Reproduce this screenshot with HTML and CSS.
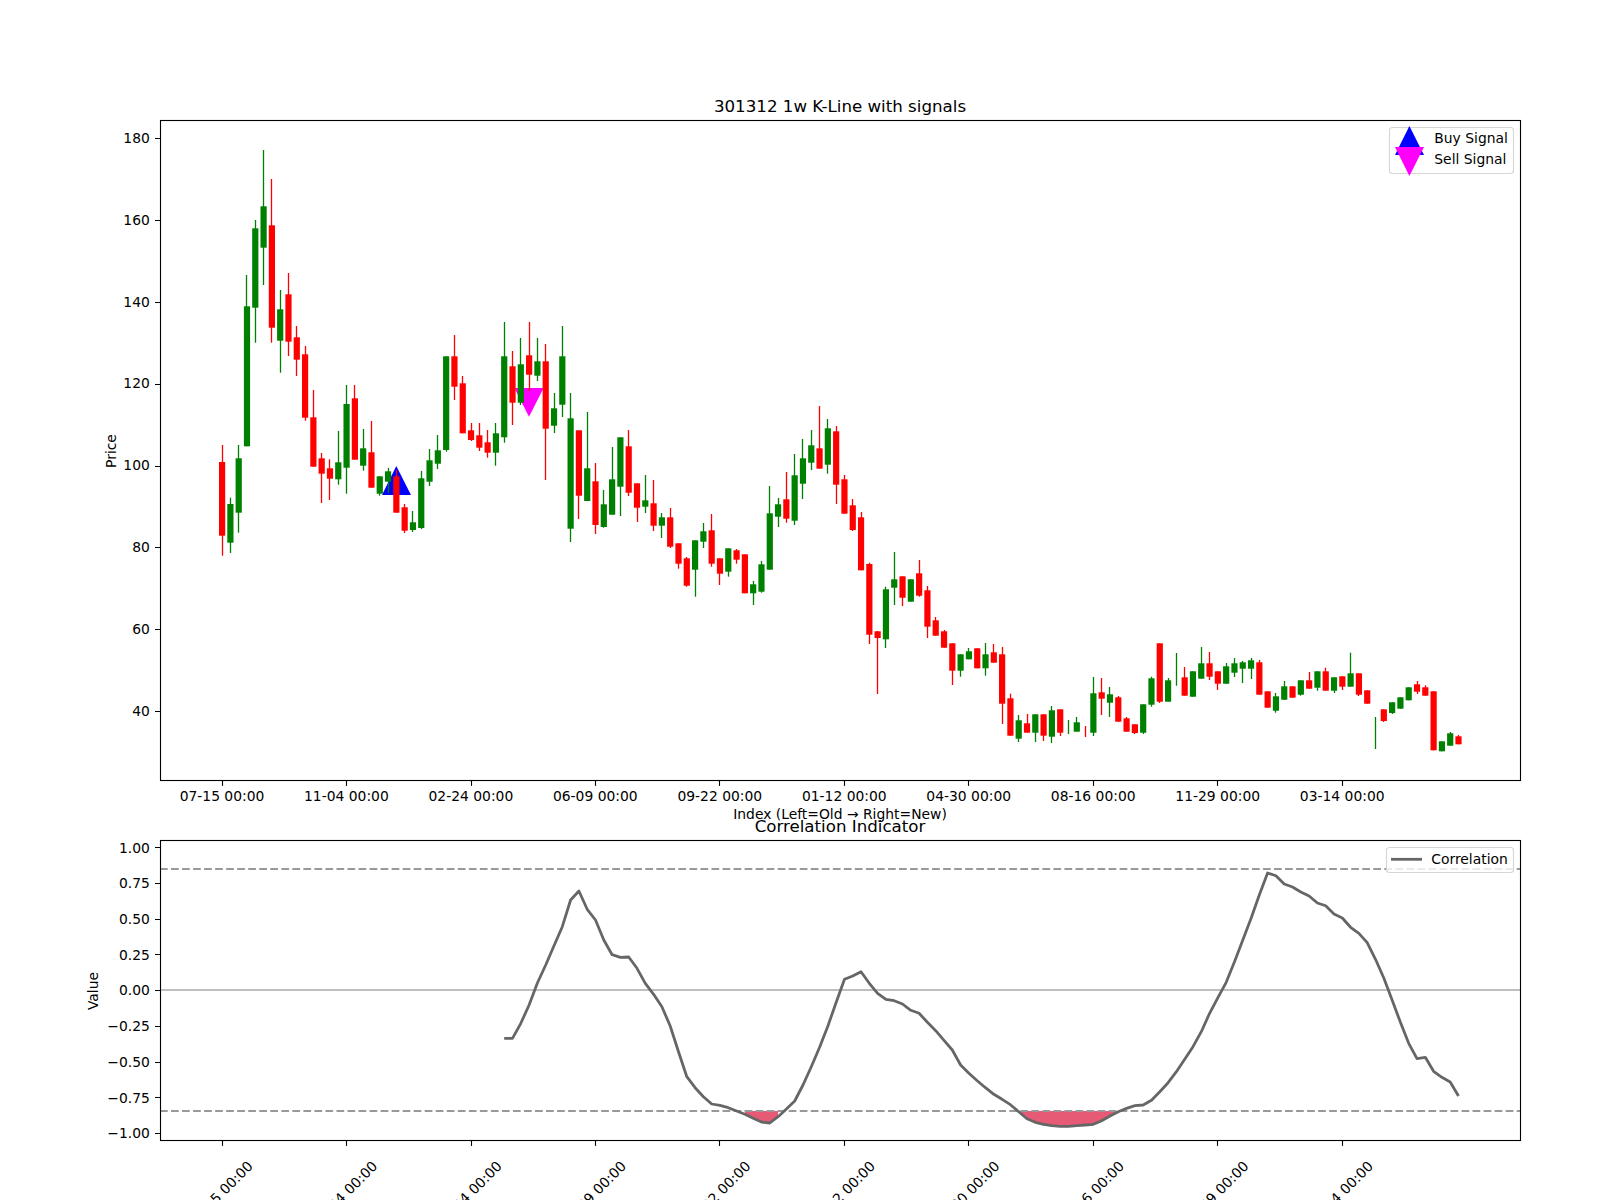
FILE: index.html
```html
<!DOCTYPE html>
<html lang="en">
<head>
<meta charset="utf-8">
<title>301312 1w K-Line with signals</title>
<link rel="stylesheet" href="styles.css">
</head>
<body>
<main class="figure">
<svg class="canvas" viewBox="0 0 1600 1200" width="1600" height="1200" xmlns="http://www.w3.org/2000/svg">
  <!-- K-line panel -->
  <polygon class="buy" points="396.3,466 411,495 382,495"/>
  <polygon class="sell" points="529,416.7 543.6,388 514.4,388"/>
  <g id="candles"></g>
  <rect class="spine" x="160.5" y="120.5" width="1360" height="660"/>
  <g id="price-x-ticks"></g>
  <path class="tick" d="M155 138.5h5M155 220.5h5M155 302.5h5M155 384.5h5M155 466.5h5M155 547.5h5M155 629.5h5M155 711.5h5"/>
  <g class="label end">
    <text x="149.8" y="143">180</text>
    <text x="149.8" y="224.8">160</text>
    <text x="149.8" y="306.6">140</text>
    <text x="149.8" y="388.4">120</text>
    <text x="149.8" y="470.2">100</text>
    <text x="149.8" y="552">80</text>
    <text x="149.8" y="633.8">60</text>
    <text x="149.8" y="715.6">40</text>
  </g>
  <g class="label mid">
    <text x="222" y="801">07-15 00:00</text>
    <text x="346.4" y="801">11-04 00:00</text>
    <text x="470.9" y="801">02-24 00:00</text>
    <text x="595.3" y="801">06-09 00:00</text>
    <text x="719.8" y="801">09-22 00:00</text>
    <text x="844.3" y="801">01-12 00:00</text>
    <text x="968.7" y="801">04-30 00:00</text>
    <text x="1093.2" y="801">08-16 00:00</text>
    <text x="1217.7" y="801">11-29 00:00</text>
    <text x="1342.2" y="801">03-14 00:00</text>
    <text x="840" y="819">Index (Left=Old → Right=New)</text>
  </g>
  <text class="title" x="840" y="111.7">301312 1w K-Line with signals</text>
  <text class="label mid" transform="rotate(-90 116 451)" x="116" y="451">Price</text>

  <g class="legend">
    <rect class="legend-box" x="1389.5" y="127.5" width="124" height="46" rx="3"/>
    <polygon class="buy" points="1409.4,126 1424,155 1395,155"/>
    <polygon class="sell" points="1409.4,176 1424,147 1395,147"/>
    <text class="label" x="1434.3" y="143.3">Buy Signal</text>
    <text class="label" x="1434.3" y="164">Sell Signal</text>
  </g>

  <!-- Correlation panel -->
  <g id="corr-fill"></g>
  <path class="dash" d="M160 869H1520M160 1111H1520"/>
  <path class="zero" d="M160 990H1520"/>
  <polyline class="corr" id="corr-line" points=""/>
  <rect class="spine" x="160.5" y="840.5" width="1360" height="300"/>
  <g id="corr-x-ticks"></g>
  <path class="tick" d="M155 847.5h5M155 883.5h5M155 919.5h5M155 954.5h5M155 990.5h5M155 1026.5h5M155 1062.5h5M155 1097.5h5M155 1133.5h5"/>
  <g class="label end">
    <text x="149.8" y="852.6">1.00</text>
    <text x="149.8" y="888.1">0.75</text>
    <text x="149.8" y="923.8">0.50</text>
    <text x="149.8" y="959.6">0.25</text>
    <text x="149.8" y="995">0.00</text>
    <text x="149.8" y="1031">−0.25</text>
    <text x="149.8" y="1066.8">−0.50</text>
    <text x="149.8" y="1102.5">−0.75</text>
    <text x="149.8" y="1138.3">−1.00</text>
  </g>
  <g class="label mid">
    <text transform="rotate(-45 220.3 1193.5)" x="220.3" y="1198.5">07-15 00:00</text>
    <text transform="rotate(-45 344.7 1193.5)" x="344.7" y="1198.5">11-04 00:00</text>
    <text transform="rotate(-45 469.2 1193.5)" x="469.2" y="1198.5">02-24 00:00</text>
    <text transform="rotate(-45 593.6 1193.5)" x="593.6" y="1198.5">06-09 00:00</text>
    <text transform="rotate(-45 718.1 1193.5)" x="718.1" y="1198.5">09-22 00:00</text>
    <text transform="rotate(-45 842.6 1193.5)" x="842.6" y="1198.5">01-12 00:00</text>
    <text transform="rotate(-45 967 1193.5)" x="967" y="1198.5">04-30 00:00</text>
    <text transform="rotate(-45 1091.5 1193.5)" x="1091.5" y="1198.5">08-16 00:00</text>
    <text transform="rotate(-45 1216 1193.5)" x="1216" y="1198.5">11-29 00:00</text>
    <text transform="rotate(-45 1340.5 1193.5)" x="1340.5" y="1198.5">03-14 00:00</text>
  </g>
  <text class="title" x="840" y="831.7">Correlation Indicator</text>
  <text class="label mid" transform="rotate(-90 98 991)" x="98" y="991">Value</text>

  <g class="legend">
    <rect class="legend-box" x="1386.5" y="847.5" width="127" height="25" rx="3"/>
    <path class="corr" d="M1391 859.3H1422"/>
    <text class="label" x="1431.3" y="864">Correlation</text>
  </g>
</svg>
</main>
<script src="chart.js"></script>
</body>
</html>
```
FILE: styles.css
```css
html, body {
  margin: 0;
  padding: 0;
  background: #fff;
}
.figure {
  width: 1600px;
  height: 1200px;
  overflow: hidden;
}
.canvas {
  display: block;
}
.title {
  font-family: "DejaVu Sans", sans-serif;
  font-size: 16.67px;
  text-anchor: middle;
  fill: #000;
}
.label {
  font-family: "DejaVu Sans", sans-serif;
  font-size: 13.89px;
  fill: #000;
}
.end { text-anchor: end; }
.mid { text-anchor: middle; }
.spine {
  fill: none;
  stroke: #000;
  stroke-width: 1.11;
}
.tick {
  fill: none;
  stroke: #000;
  stroke-width: 1.11;
}
.buy { fill: #0000ff; }
.sell { fill: #ff00ff; }
.up { fill: #008000; stroke: none; }
.down { fill: #ff0000; stroke: none; }
.wick-up { stroke: #008000; stroke-width: 1.3; fill: none; }
.wick-down { stroke: #ff0000; stroke-width: 1.3; fill: none; }
.legend-box {
  fill: #fff;
  fill-opacity: 0.8;
  stroke: #d6d6d6;
  stroke-width: 1.11;
}
.dash {
  fill: none;
  stroke: #999;
  stroke-width: 2.08;
  stroke-dasharray: 7.7 3.33;
}
.zero {
  fill: none;
  stroke: #aaa;
  stroke-width: 1.7;
}
.corr {
  fill: none;
  stroke: #666;
  stroke-width: 2.78;
  stroke-linejoin: round;
}
.zone {
  fill: #dc143c;
  fill-opacity: 0.7;
  stroke: none;
}
```
FILE: chart.js
```js
var SVG_NS = "http://www.w3.org/2000/svg";
var X0 = 222.1, STEP = 8.298;

// [green?, wick top, wick bottom, body top, body bottom] in plot pixels, oldest first
var candles = [
  [0,445,555.7,462,535.7],[1,497.7,553,504,542.7],[1,445,532.7,458.3,512.7],[1,275,446.3,306.3,446.3],
  [1,220,342.7,228.3,307.7],[1,150,285,206.3,247.7],[0,179,342.7,225.3,327.7],[1,290,372.7,309.3,340.7],
  [0,273,356,294.3,341.7],[0,326,376,337.3,359.7],[0,346,420.7,354.3,417.7],[0,390,466.7,417.3,466.7],
  [0,453,503,458.3,473.7],[0,459.3,500,468.3,478.7],[1,431,484.7,462.3,479.3],[1,385,493.7,404,467.7],
  [0,385,459.7,398.3,459.7],[1,429,470.7,448.3,465.7],[0,421,487.7,452.3,487.7],[1,476.3,495.7,476.3,493.7],
  [1,468,493,471.3,481.7],[0,470,512.7,476.3,512.7],[0,504,533,507.3,530.7],[1,511,532,522.3,530],
  [1,471,529,478.3,528],[1,449,486,460.3,481.7],[1,435,469,450.3,463.7],[1,356.3,451.7,356.3,450],
  [0,335,400,356.3,386.7],[0,376,433.3,383.3,433.3],[0,423,441,430.3,440],[0,423,451,435.3,447.7],
  [0,430,457.7,442.3,452.7],[1,423,465.7,433.3,452.7],[1,322,442.7,356.3,437.3],[0,351,425,366.3,402.7],
  [1,338,405,364.3,402.7],[0,322,391,355.3,374.7],[1,338,381,361.3,375.7],[0,344,480,361.3,428.7],
  [1,393,433,408.3,425.7],[1,326,417,356.3,404.7],[1,393,542,418.3,528.7],[0,430.3,519,430.3,495.7],
  [1,412,501,468.3,501],[0,463,534,481.3,525],[1,490,527.7,504.3,527],[1,447,514.7,479.3,514.7],
  [1,437.3,516,437.3,486.7],[0,430,496,446.3,492.7],[0,483.3,522,483.3,507.7],[1,475,513,500.3,506.7],
  [0,480,531,503.3,525.7],[1,513,538,517.3,525.7],[0,508,548,517.3,546.7],[0,543.3,568.7,543.3,563.7],
  [0,557,586.7,558.3,585.7],[1,540.3,596.7,540.3,569.7],[1,523,548,531.3,541.7],[0,514,566.7,530.3,563.7],
  [0,558.3,585,558.3,573.7],[1,548.3,576.7,548.3,571.7],[0,549,563.7,550.3,559.7],[0,554.3,593.3,554.3,593.3],
  [1,581,605,584.3,593.3],[1,561,592.7,564.3,591.7],[1,486,569.7,513.3,569.7],[1,498,527,504.3,516.7],
  [0,472,522.7,499.3,518.7],[1,454,525,475.3,520.7],[1,439,499,458.3,483.7],[1,430,470,445.3,462.7],
  [0,406,468.7,448.3,468.7],[1,419,473.7,428.3,464.7],[0,426,504,431.3,484.7],[0,475,513.7,479.3,513.7],
  [0,499,531,505.3,530],[0,512,570.3,517.3,570.3],[0,562.7,644,564,634.7],[0,631,694,631.3,638],
  [1,586.7,648,589.3,639.3],[1,552,605,579.3,587.7],[0,576.3,606,576.3,597.7],[1,579.3,601.7,579.3,601.7],
  [0,560,596.7,573.3,595.7],[0,586,638,590.3,626.7],[0,617,635.7,620.3,635.7],[0,630,647.7,631.3,647.7],
  [0,643.3,685,643.3,670.7],[1,654.3,676.7,654.3,670.7],[1,648,659.3,651.3,659.3],[0,648.3,668.3,648.3,668.3],
  [1,643,675.7,654.3,668.3],[0,644,662.7,652.3,662.7],[0,647,724,654.3,703.7],[0,693.7,735.7,698.3,735.7],
  [1,715,742,720.3,738.7],[0,714,732.7,723.3,732.7],[1,714.3,742,714.3,732.7],[0,714.3,741,714.3,735.7],
  [1,706,743,710.3,736.7],[0,709.3,736,709.3,732.7],[1,720,734,0,0],[1,717,731.7,722.3,731.7],
  [0,726,737,0,0],[1,677,736,693.3,732.7],[0,678,715,692.3,698.7],[1,687,717,694.3,702.7],
  [0,696,721.7,697.3,721.7],[0,717,731.7,718.3,731.7],[0,724.3,734,724.3,733],[1,704.3,734,704.3,732.7],
  [1,676.7,706.7,678.3,704.7],[0,643.3,703,643.3,701.7],[1,678,701.7,680.3,701.7],[1,653,685.7,0,0],
  [0,667,695.7,677.3,695.7],[1,671.3,696.7,671.3,696.7],[1,647,678.7,663.3,678.7],[0,652,680,663.3,676.7],
  [0,671.3,690,671.3,683.7],[1,663,683.7,666.3,683.7],[1,658,677,663.3,672.7],[1,661,683,662.3,668.7],
  [1,658,679,660.3,668.7],[0,660,694.7,662.3,694.7],[0,691.3,707.7,691.3,707.7],[1,693,712.7,696.3,710.7],
  [1,681,700,686.3,699.7],[0,686.3,697.7,686.3,697.7],[1,680.3,695.7,680.3,694.7],[0,672,688.7,680.3,688.7],
  [1,671.3,690.7,671.3,687.7],[0,667.7,690.7,671.3,690.7],[1,677.3,693,677.3,690.7],[0,676.3,690,676.3,686.7],
  [1,652.7,686.7,673.3,686.7],[0,673.3,696,673.3,694.7],[0,690.3,703.7,690.3,703.7],[1,717,749,0,0],
  [0,709.3,722,709.3,721],[1,702.3,714,702.3,713],[1,697.3,708.7,697.3,708.7],[1,687.3,700.3,687.3,700.3],
  [0,681,694,684.3,691.7],[0,685.3,695.7,687.3,695.7],[0,691.3,750.3,691.3,750.3],[1,741.3,751.3,741.3,751.3],
  [1,732,745.7,733.3,745.7],[0,735,744.3,736.3,744.3]
];

// Correlation line, y in plot pixels, starting at candle 34
var CORR_START = 34;
var corr = [
  1038.3,1038.3,1023.3,1005,983,965,945.7,926.7,900,891,909.3,920,940,954.7,957.3,957,968.3,983.3,994.3,1006.7,
  1026,1051.7,1076.7,1087.7,1096.7,1104,1105.3,1107.7,1111,1114.3,1118.3,1122,1123,1116.7,1109,1101,1085,1066.7,
  1047.3,1026,1002.3,979.3,976,971.7,983.3,993.3,999.3,1000.7,1004,1010.3,1013.3,1022.3,1030.7,1040.3,1050,1065,
  1073.3,1080.7,1087.7,1094.3,1099.3,1104.7,1111.7,1118.7,1122.3,1124.3,1125.7,1126.3,1126.3,1125.7,1125,1124.3,
  1120.7,1116,1111.7,1108.3,1105.7,1105,1100.3,1091.7,1082.7,1071.7,1059.3,1046.7,1031.7,1013.3,997.7,982.3,961.7,
  940,918.3,895,873,875.7,884,887,892,896,903,905.7,914,918,927.3,933.3,942.7,959.3,978,1000,1022.3,1043.3,1058.7,
  1057.3,1071.3,1077.3,1082,1096
];
var LOWER_BAND = 1111;
var ZONES = [[63, 67], [96, 108]];

function xAt(i) { return X0 + STEP * i; }
function snap(x) { return Math.floor(x) + 0.5; }
function make(name, attrs, parent) {
  var el = document.createElementNS(SVG_NS, name);
  for (var k in attrs) el.setAttribute(k, attrs[k]);
  parent.appendChild(el);
  return el;
}

var candleGroup = document.getElementById("candles");
candles.forEach(function (c, i) {
  var x = xAt(i), up = c[0] === 1;
  make("line", {
    "class": up ? "wick-up" : "wick-down",
    x1: snap(x), x2: snap(x), y1: c[1], y2: c[2]
  }, candleGroup);
  if (c[4] > c[3]) {
    make("rect", {
      "class": up ? "up" : "down",
      x: (x - 3.1).toFixed(2), y: c[3], width: 6.2, height: (c[4] - c[3]).toFixed(1)
    }, candleGroup);
  }
});

document.getElementById("corr-line").setAttribute("points", corr.map(function (y, n) {
  return xAt(n + CORR_START).toFixed(1) + "," + y;
}).join(" "));

var fillGroup = document.getElementById("corr-fill");
ZONES.forEach(function (z) {
  var pts = [xAt(z[0]).toFixed(1) + "," + LOWER_BAND];
  for (var i = z[0]; i <= z[1]; i++) pts.push(xAt(i).toFixed(1) + "," + corr[i - CORR_START]);
  pts.push(xAt(z[1]).toFixed(1) + "," + LOWER_BAND);
  make("polygon", { "class": "zone", points: pts.join(" ") }, fillGroup);
});

["price-x-ticks", "corr-x-ticks"].forEach(function (id, panel) {
  var group = document.getElementById(id), top = panel === 0 ? 781 : 1141;
  for (var i = 0; i < 150; i += 15) {
    make("line", { "class": "tick", x1: snap(xAt(i)), x2: snap(xAt(i)), y1: top, y2: top + 4.9 }, group);
  }
});
```
